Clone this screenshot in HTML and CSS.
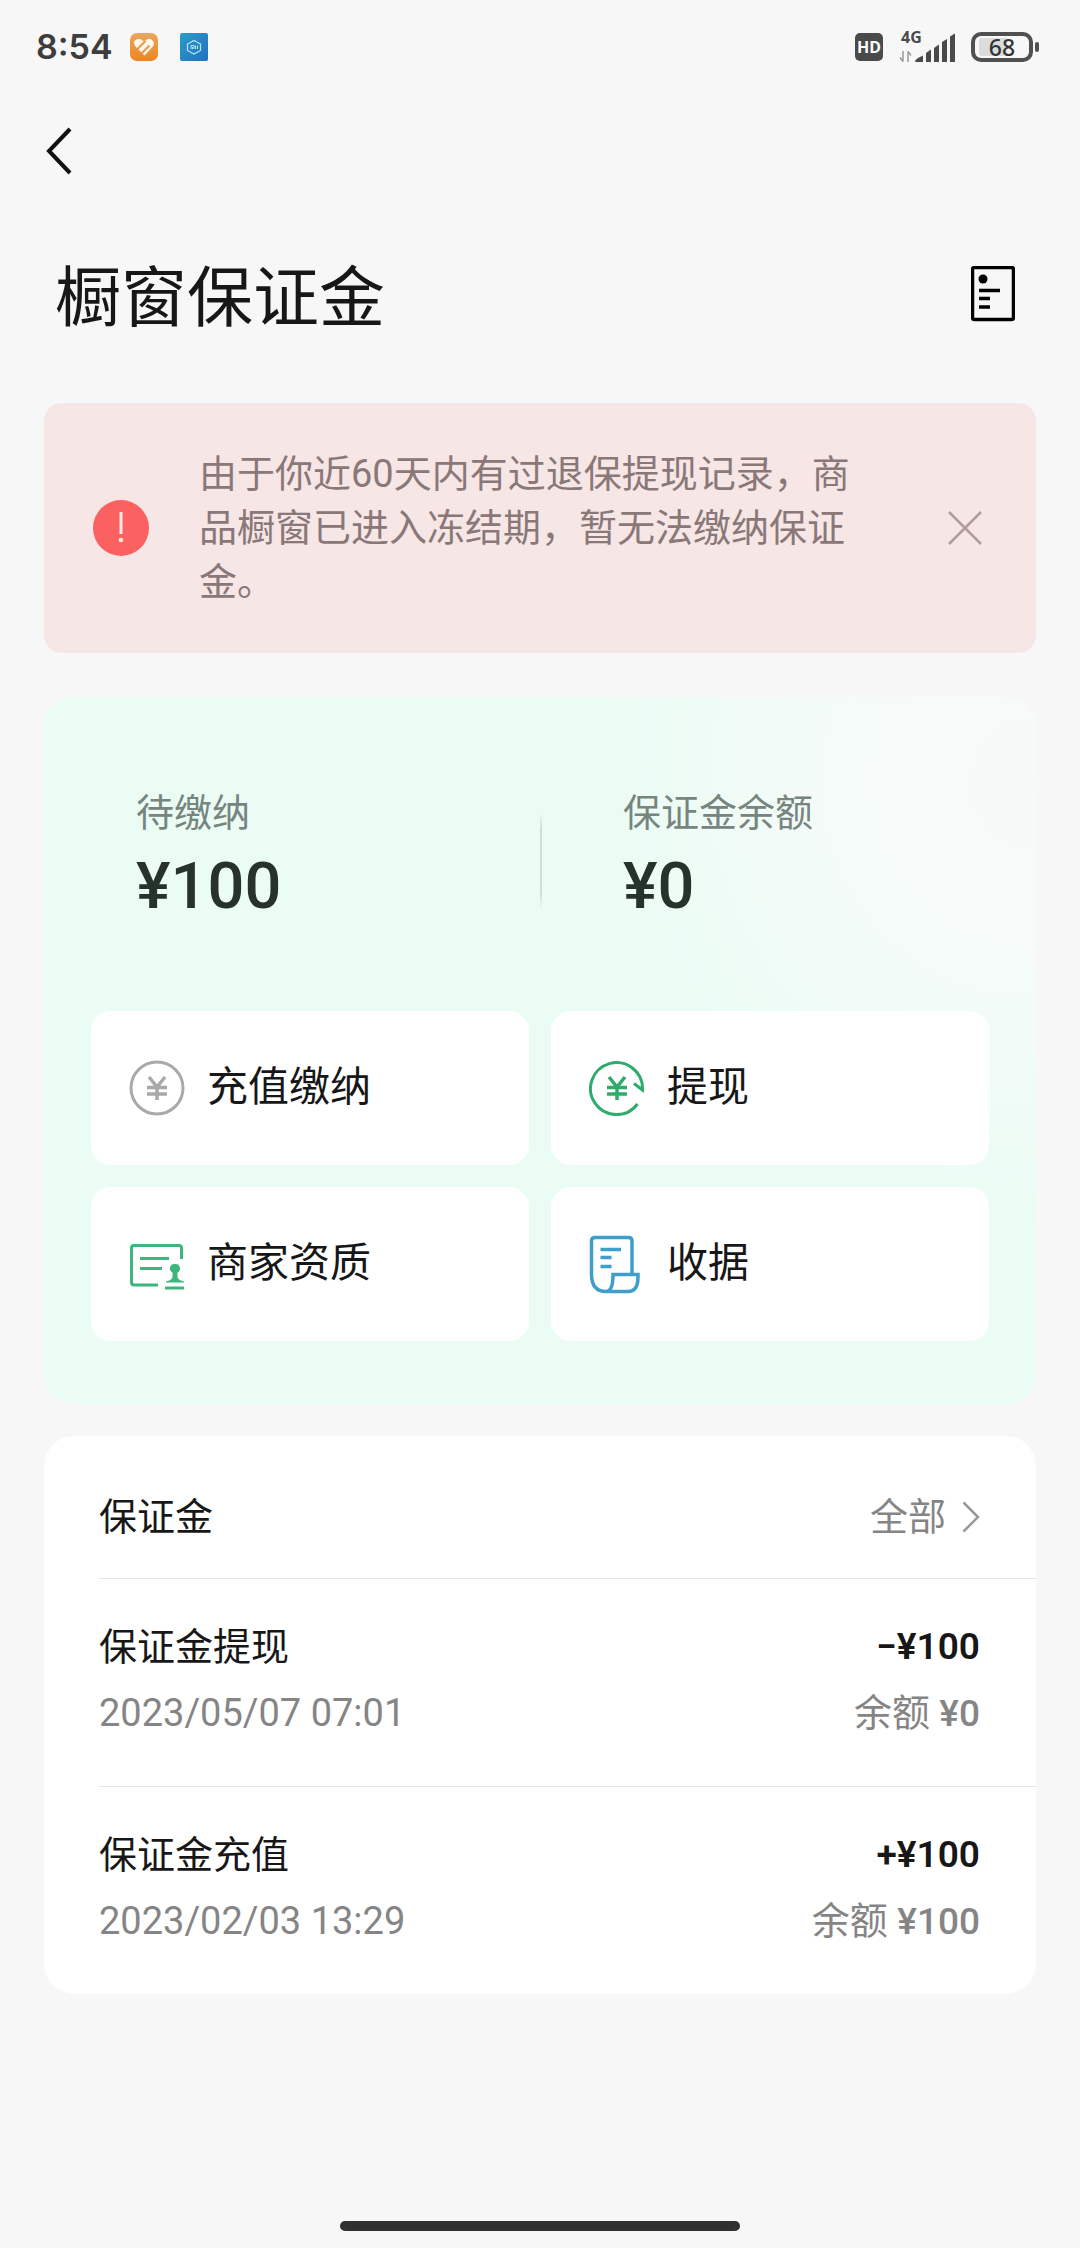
FILE: index.html
```html
<!DOCTYPE html>
<html lang="zh-CN">
<head>
<meta charset="utf-8">
<meta name="viewport" content="width=device-width">
<title>橱窗保证金</title>
<link rel="stylesheet" href="styles.css">
</head>
<body>
<div class="status">
  <span class="time">8:54</span>
  <svg class="app-icon" width="28" height="28" viewBox="0 0 28 28">
    <defs><linearGradient id="og" x1="0" y1="0" x2="0" y2="1"><stop offset="0" stop-color="#e8a860"/><stop offset="1" stop-color="#ee8424"/></linearGradient></defs>
    <rect width="28" height="28" rx="7" fill="url(#og)"/>
    <path d="M14 8.500Q18 4.500 21.500 6.500Q26 10 22.500 14L14.500 22.500L5.500 13.500Q2.500 9.500 5.500 7Q9.500 4.500 14 8.500Z" fill="#fff6ec"/>
    <path d="M6.500 17L15.500 8M11.500 20.500L19.500 12.500" stroke="#ea9540" stroke-width="1.800"/>
  </svg>
  <svg class="app-icon" width="28" height="28" viewBox="0 0 28 28">
    <defs><linearGradient id="bg" x1="0" y1="0" x2="1" y2="1"><stop offset="0" stop-color="#2b9cc8"/><stop offset="1" stop-color="#2270c0"/></linearGradient></defs>
    <rect width="28" height="28" rx="2" fill="url(#bg)"/>
    <path d="M14 7.500L20.500 11V17.500L14 21L7.500 17.500V11Z" fill="none" stroke="#b8e6f4" stroke-width="1.200"/>
    <path d="M11 16V12.500H14V16M12.500 14V16M15.500 12.500V16M17.500 12.500V16" fill="none" stroke="#b8e6f4"/>
  </svg>
  <div class="status-right">
    <span class="hd">HD</span>
    <span class="network">
      <span class="net-label">4G</span>
      <svg width="56" height="32" viewBox="0 0 56 32">
        <g fill="none" stroke="#9a9a9a" stroke-width="1.500"><path d="M4 20V30.500M1 26.500L4 30.500M9 31V20.500M12 24.500L9 20.500"/></g>
        <g fill="#4a4a4a"><path d="M16 30.500Q16 28 24 24.500V31H16.500Z"/><path d="M27 22L32 18.500V31H27Z"/><path d="M35 17L40 13.500V31H35Z"/><path d="M43 11L48 8V31H43Z"/><path d="M51 5.500L56 2.500V31H51Z"/></g>
      </svg>
    </span>
    <span class="battery">68</span>
  </div>
</div>

<nav class="nav">
  <button class="icon-btn" aria-label="返回">
    <svg width="26" height="48" viewBox="0 0 26 48" fill="none" stroke="#111" stroke-width="4"><path d="M24 2L3 24L24 46"/></svg>
  </button>
</nav>

<header class="heading">
  <h1>橱窗保证金</h1>
  <button class="icon-btn" aria-label="明细">
    <svg width="44" height="56" viewBox="0 0 44 56"><rect x="1.500" y="1.500" width="41" height="52" rx="2" fill="none" stroke="#000" stroke-width="3.500"/><circle cx="12" cy="13" r="4.500"/><path d="M8 24.500H29M8 32.500H19M8 41H19" stroke="#000" stroke-width="3.500"/></svg>
  </button>
</header>

<main class="content">
  <section class="alert" role="alert">
    <svg width="56" height="56" viewBox="0 0 56 56"><circle cx="28" cy="28" r="28" fill="#fa6160"/><path d="M28 12V34" stroke="#fde8e6" stroke-width="3"/><circle cx="28" cy="40" r="2.300" fill="#fde8e6"/></svg>
    <p class="alert-text">由于你近60天内有过退保提现记录，商品橱窗已进入冻结期，暂无法缴纳保证金。</p>
    <button class="icon-btn" aria-label="关闭">
      <svg width="34" height="34" viewBox="0 0 34 34" stroke="#b09e9e" stroke-width="2.500"><path d="M1 1L33 33M33 1L1 33"/></svg>
    </button>
  </section>

  <section class="summary">
    <div class="stats">
      <div class="stat"><span class="stat-label">待缴纳</span><span class="stat-value">¥100</span></div>
      <div class="stat"><span class="stat-label">保证金余额</span><span class="stat-value">¥0</span></div>
    </div>
    <div class="tiles">
      <button class="tile">
        <svg width="56" height="56" viewBox="0 0 56 56" fill="none" stroke="#a9a9a9" stroke-width="3"><circle cx="28" cy="28" r="26"/><path d="M20 17L28 27L36 17M18 27.500H38M18 34H38M28 27V40" stroke-width="3.500"/></svg>
        <span class="tile-label">充值缴纳</span>
      </button>
      <button class="tile">
        <svg width="56" height="56" viewBox="0 0 56 56" fill="none" stroke="#2fab6c" stroke-width="3"><path d="M48.500 44A26 26 0 1 1 53.500 30L45 23.500"/><path d="M20 17L28 27L36 17M18 27.500H38M18 34H38M28 27V40" stroke-width="3.500"/></svg>
        <span class="tile-label">提现</span>
      </button>
      <button class="tile">
        <svg width="56" height="56" viewBox="0 0 56 56" fill="none" stroke="#3db57c" stroke-width="3"><path d="M29 49H5Q2.500 49 2.500 46.500V12Q2.500 9.500 5 9.500H50Q52.500 9.500 52.500 12V23"/><path d="M11 22.500H40M11 32.500H33M36 52H55"/><path d="M46 28a4.500 4.500 0 0 1 2.500 8.500V41Q49 44 55 45.500V46.500H37V45.500Q43 44 43.500 41V36.500A4.500 4.500 0 0 1 46 28Z" fill="#3db57c" stroke="none"/></svg>
        <span class="tile-label">商家资质</span>
      </button>
      <button class="tile">
        <svg width="56" height="60" viewBox="0 0 56 60" fill="none" stroke="#3d9fca" stroke-width="3.500"><path d="M43 40V7Q43 3.500 39.500 3.500H6Q2.500 3.500 2.500 7V40Q2.500 57.500 17 57.500H39Q49 57.500 49 43V40.500H24Q24 57.500 17 57.500"/><path d="M11.500 15.500H32M11.500 23.500H22.500M11.500 32.500H22.500"/></svg>
        <span class="tile-label">收据</span>
      </button>
    </div>
  </section>

  <section class="records">
    <div class="records-head">
      <h2 class="head-text">保证金</h2>
      <a class="all" href="#"><span class="head-text">全部</span>
        <svg width="18" height="32" viewBox="0 0 18 32" fill="none" stroke="#999" stroke-width="2.500"><path d="M1.500 1.500L16 16L1.500 30.500"/></svg>
      </a>
    </div>
    <ul class="record-list">
      <li class="record">
        <div class="line"><span>保证金提现</span><span class="amount">−¥100</span></div>
        <div class="line muted"><time>2023/05/07 07:01</time><span>余额 <span class="amount">¥0</span></span></div>
      </li>
      <li class="record">
        <div class="line"><span>保证金充值</span><span class="amount">+¥100</span></div>
        <div class="line muted"><time>2023/02/03 13:29</time><span>余额 <span class="amount">¥100</span></span></div>
      </li>
    </ul>
  </section>
</main>
<div class="home-bar"></div>
</body>
</html>
```
FILE: styles.css
```css
* { box-sizing: border-box; }

body {
  margin: 0;
  min-height: 100vh;
  display: flex;
  flex-direction: column;
  background: #f7f7f7;
  color: #171717;
  font-family: Roboto, "Noto Sans CJK SC", sans-serif;
  font-size: 38px;
}

h1, h2, p, ul { margin: 0; padding: 0; font-weight: 400; }
ul { list-style: none; }
svg { display: block; flex: none; }

button {
  border: 0;
  padding: 0;
  background: none;
  color: inherit;
  font: inherit;
}
.icon-btn { display: block; }

/* Status bar */
.status {
  display: flex;
  align-items: center;
  height: 94px;
  padding: 0 41px 0 36px;
}
.time {
  margin-right: 17px;
  color: #3d3d3d;
  font: 600 34px/40px Inter, sans-serif;
}
.app-icon { margin-right: 22px; }
.status-right {
  display: flex;
  align-items: center;
  gap: 16px;
  margin-left: auto;
}
.hd {
  width: 28px;
  border-radius: 5px;
  background: #4a4a4a;
  color: #fff;
  font: 700 16px/28px "Noto Sans", sans-serif;
  text-align: center;
}
.network { position: relative; }
.net-label {
  position: absolute;
  top: -2px;
  left: 2px;
  color: #4a4a4a;
  font: 700 16px/16px "Noto Sans", sans-serif;
}
.battery {
  position: relative;
  width: 62px;
  margin-right: 6px;
  border: 4px solid #505050;
  border-radius: 10px;
  background: linear-gradient(90deg, #dcdcdc 60%, #f7f7f7 60%) content-box;
  padding: 2px 4px;
  color: #333;
  font: 500 23px/18px "Noto Sans", sans-serif;
  text-align: center;
}
.battery::after {
  content: "";
  position: absolute;
  top: 6px;
  right: -10px;
  width: 4px;
  height: 10px;
  border-radius: 2px;
  background: #505050;
}

/* Title area */
.nav { padding: 33px 46px 0; }
.heading {
  display: flex;
  align-items: center;
  justify-content: space-between;
  padding: 75px 65px 55px 55px;
}
.heading .icon-btn { margin-bottom: 10px; }
h1 { font-size: 66px; line-height: 98px; }

.content {
  display: flex;
  flex-direction: column;
  padding: 0 44px;
}

/* Notice */
.alert {
  display: flex;
  align-items: center;
  padding: 44px 54px 44px 49px;
  border-radius: 18px;
  background: #f6e6e6;
}
.alert-text {
  flex: 1;
  margin: 0 78px 0 50px;
  color: #8a7878;
  line-height: 54px;
}

/* Deposit summary */
.summary {
  margin-top: 44px;
  padding: 88px 47px 63px;
  border-radius: 28px;
  background:
    radial-gradient(circle at 100% 12%, #f7f9f9 0, #f6fbf9 160px, rgba(240, 254, 247, 0) 460px),
    #eafcf4;
}
.stats {
  display: grid;
  grid-template-columns: 1fr 1fr;
  padding-bottom: 80px;
}
.stat {
  display: flex;
  flex-direction: column;
  padding-left: 45px;
}
.stat + .stat {
  padding-left: 83px;
  background: linear-gradient(transparent 28px, #d0ddd7 44px, #d0ddd7 108px, transparent 124px) 0 0 / 2px 100% no-repeat;
}
.stat-label { color: #76857e; line-height: 56px; }
.stat-value {
  color: #27322d;
  font-size: 65px;
  font-weight: 500;
  line-height: 90px;
}
.tiles {
  display: grid;
  grid-template-columns: 1fr 1fr;
  gap: 22px;
}
.tile {
  display: flex;
  align-items: center;
  gap: 22px;
  height: 154px;
  padding: 0 38px;
  border-radius: 20px;
  background: #fff;
  font-size: 41px;
}
.tile-label { padding-bottom: 10px; }

/* Records */
.records {
  margin-top: 32px;
  border-radius: 30px;
  background: #fff;
}
.records-head {
  display: flex;
  align-items: center;
  justify-content: space-between;
  height: 142px;
  padding: 20px 56px 0 0;
  margin-left: 55px;
}
h2 { font-size: 38px; }
.head-text { padding-bottom: 8px; }
.all {
  display: flex;
  align-items: center;
  gap: 16px;
  color: #858585;
  text-decoration: none;
}
.record {
  margin-left: 55px;
  padding: 35px 56px 39px 0;
  border-top: 1px solid #e4e4e4;
}
.line {
  display: flex;
  justify-content: space-between;
  line-height: 66px;
}
.muted { color: #858585; }
.amount { font-size: 37px; font-weight: 600; }
.muted .amount { font-weight: 500; }

.home-bar {
  width: 37%;
  height: 10px;
  margin: auto auto 17px;
  border-radius: 5px;
  background: #303030;
}
```
